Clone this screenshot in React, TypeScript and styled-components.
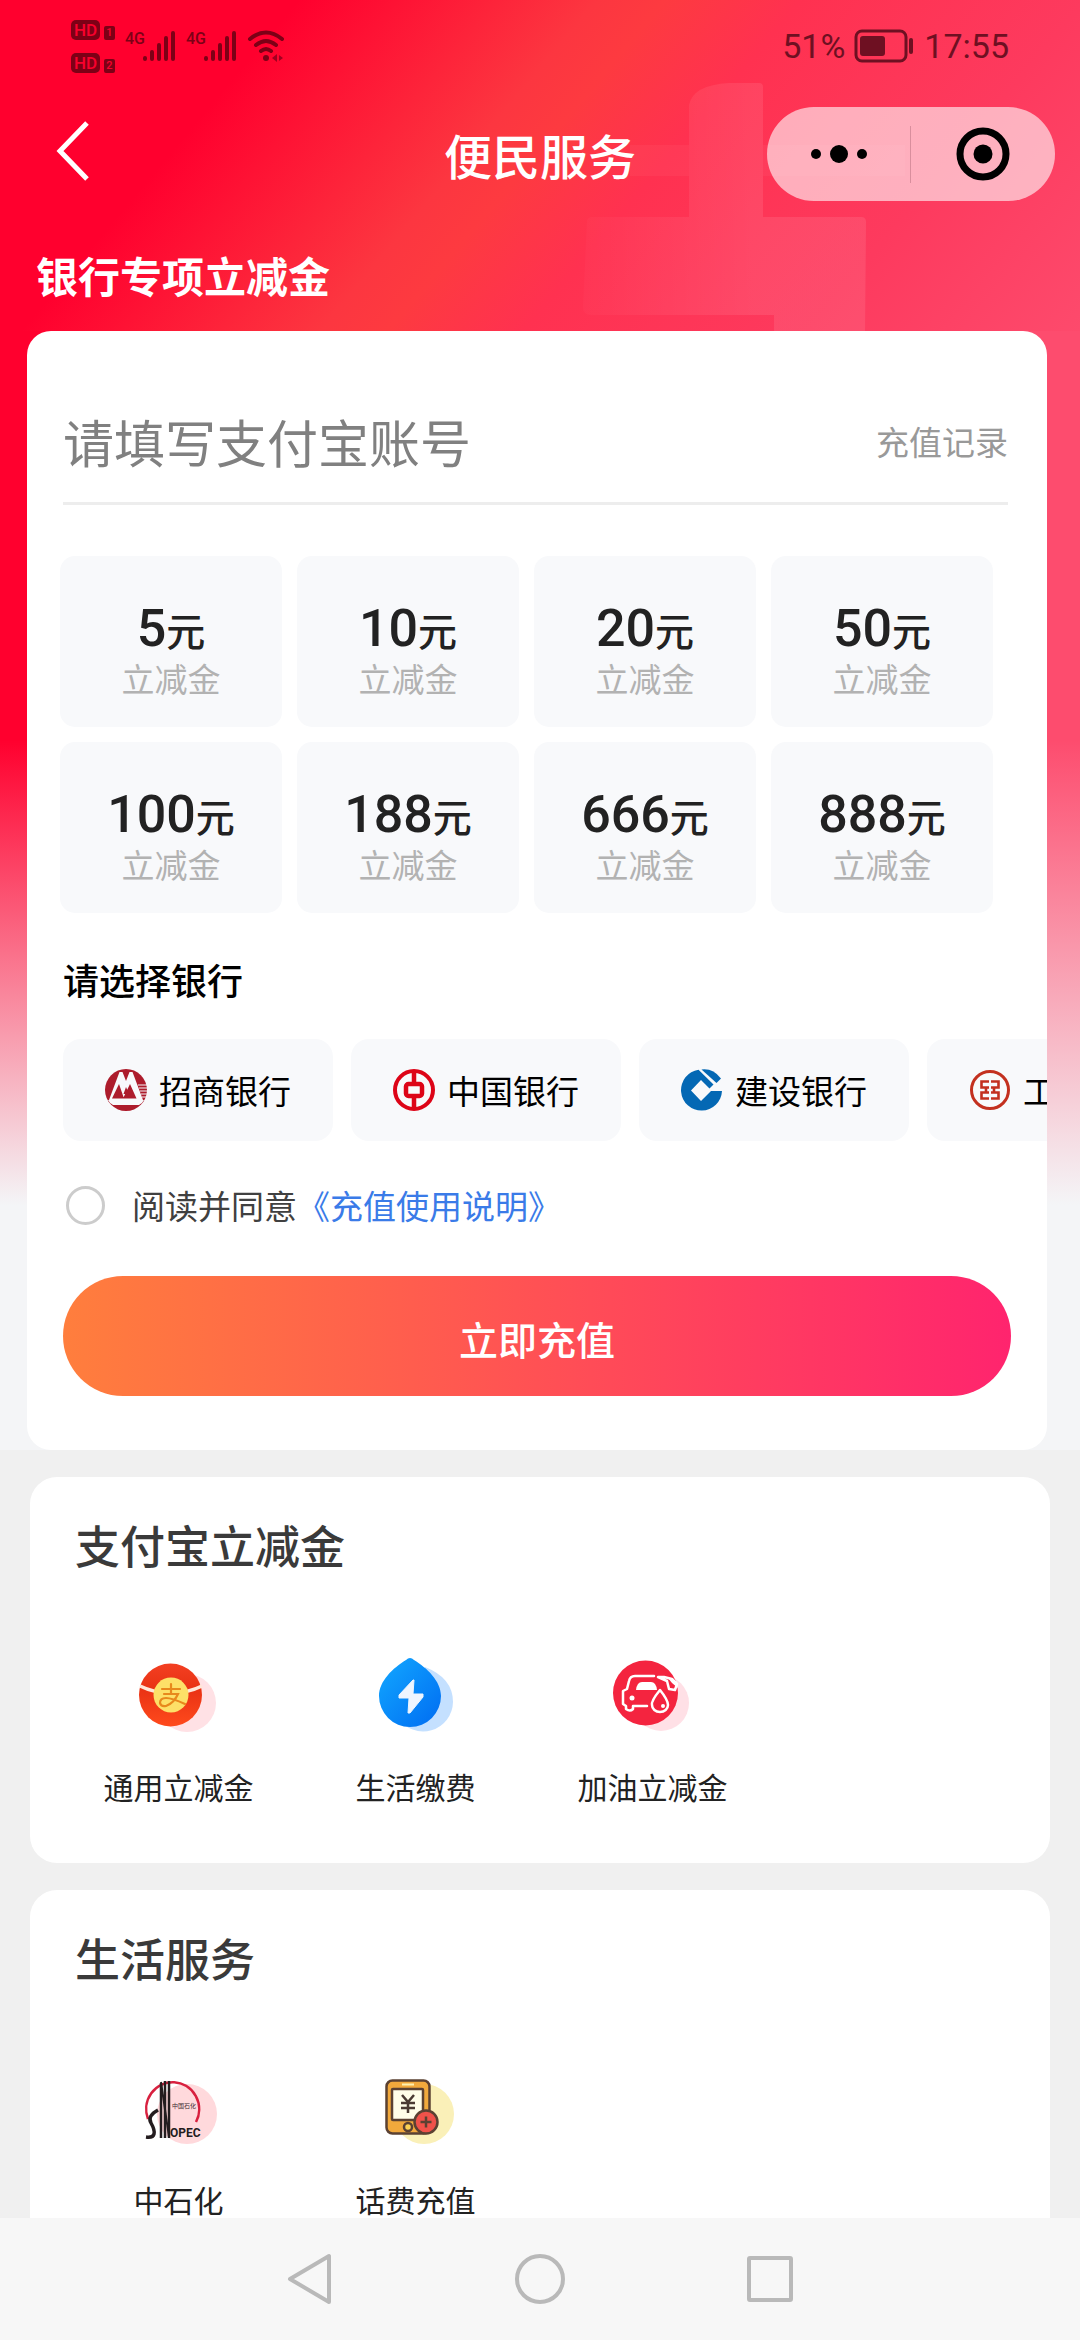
import React from "react";
import styled, { createGlobalStyle } from "styled-components";

const GlobalStyle = createGlobalStyle`
  * { box-sizing: border-box; }
  body {
    margin: 0;
    background: #f0f0f0;
    font-family: "Noto Sans CJK SC", "Noto Sans", sans-serif;
  }
  button, input { font-family: inherit; }
  button { border: 0; padding: 0; background: none; cursor: pointer; }
  h1, h2, p { margin: 0; }
`;

const Screen = styled.div`
  display: flex;
  flex-direction: column;
  height: 100vh;
  overflow: hidden;
`;

const Scroller = styled.main`
  flex: 1;
  min-height: 0;
  overflow-y: auto;
  scrollbar-width: none;
  &::-webkit-scrollbar { display: none; }
`;

const Hero = styled.div`
  position: relative;
  background:
    linear-gradient(180deg, rgba(244, 245, 247, 0) 740px, #f4f5f7 1205px),
    linear-gradient(130deg, #ff002e 22%, #fc3640 44%, #fd3a40 49%, #ff3150 59%, #fd3a5e 80%, #fd4a6c 100%) 0 0 / 100% 331px no-repeat,
    linear-gradient(90deg, #ff002e 10%, #fd4c6e 90%);
`;

const Pattern = styled.svg`
  position: absolute;
  top: 0;
  right: 0;
  width: 540px;
  height: 331px;
`;

const StatusBar = styled.header`
  position: relative;
  display: flex;
  justify-content: space-between;
  align-items: center;
  height: 92px;
  padding: 0 71px;
`;

const StatusGroup = styled.div<{ $gap: number }>`
  display: flex;
  align-items: center;
  gap: ${(p) => p.$gap}px;
  color: #6e1022;
  font: 400 34px/40px Roboto, sans-serif;
`;

const HdStack = styled.div`
  display: grid;
  gap: 13px;
`;

const HdRow = styled.div`
  display: flex;
  align-items: flex-end;
  gap: 4px;
`;

const HdBadge = styled.span<{ $small?: boolean }>`
  display: block;
  width: ${(p) => (p.$small ? 11 : 29)}px;
  height: ${(p) => (p.$small ? 14 : 20)}px;
  border-radius: ${(p) => (p.$small ? 2 : 5)}px;
  background: #7d0016;
  color: #f9002d;
  font: 500 ${(p) => (p.$small ? 11 : 17)}px/${(p) => (p.$small ? 14 : 20)}px Roboto, sans-serif;
  text-align: center;
`;

const TitleBar = styled.div`
  position: relative;
  display: grid;
  grid-template-columns: 1fr auto 1fr;
  align-items: center;
  height: 124px;
  padding: 0 25px;
`;

const BackButton = styled.button`
  justify-self: start;
  display: flex;
  padding: 0 31px 6px;
`;

const PageTitle = styled.h1`
  color: #fff;
  font-size: 48px;
  line-height: 60px;
  font-weight: 500;
`;

const Capsule = styled.div`
  justify-self: end;
  display: grid;
  grid-template-columns: 1fr 1fr;
  align-items: center;
  width: 288px;
  height: 94px;
  border-radius: 47px;
  background: rgba(255, 255, 255, 0.6);
`;

const CapsuleButton = styled.button<{ $divided?: boolean }>`
  display: flex;
  justify-content: center;
  align-items: center;
  height: 57px;
  border-right: ${(p) => (p.$divided ? "1px solid #d98e9d" : "0")};
`;

const HeroTitle = styled.h2`
  position: relative;
  padding: 29px 36px 26px;
  color: #fff;
  font-size: 42px;
  line-height: 60px;
  font-weight: 700;
`;

const RechargeCard = styled.form`
  position: relative;
  margin: 0 33px 0 27px;
  padding: 49px 36px 54px;
  border-radius: 24px;
  background: #fff;
`;

const AccountRow = styled.div`
  display: flex;
  align-items: center;
  height: 125px;
  margin-right: 3px;
  border-bottom: 3px solid #ededed;
`;

const AccountInput = styled.input`
  flex: 1;
  min-width: 0;
  height: 76px;
  padding: 0;
  border: 0;
  outline: 0;
  background: none;
  color: #222;
  font-size: 51px;
  &::placeholder { color: #808080; opacity: 1; }
`;

const RecordLink = styled.a`
  color: #999;
  font-size: 33px;
  line-height: 42px;
  text-decoration: none;
`;

const AmountGrid = styled.div`
  display: grid;
  grid-template-columns: repeat(4, 1fr);
  gap: 15px;
  margin: 51px 18px 0 -3px;
`;

const AmountButton = styled.button`
  display: flex;
  flex-direction: column;
  align-items: center;
  height: 171px;
  padding-top: 45px;
  border-radius: 15px;
  background: #f8f9fb;
`;

const Price = styled.span`
  color: #222;
  font: 500 52px/56px Roboto, sans-serif;
`;

const Yuan = styled.span`
  font: 500 39px/56px "Noto Sans CJK SC", sans-serif;
`;

const AmountNote = styled.span`
  color: #b2b2b2;
  font-size: 33px;
  line-height: 42px;
`;

const BankHeading = styled.p`
  margin: 42px 0 36px;
  color: #000;
  font-size: 36px;
  line-height: 48px;
  font-weight: 500;
`;

const BankList = styled.div`
  display: flex;
  gap: 18px;
  margin-right: -36px;
  overflow-x: auto;
  scrollbar-width: none;
  &::-webkit-scrollbar { display: none; }
`;

const BankButton = styled.button`
  flex: 0 0 270px;
  display: flex;
  align-items: center;
  gap: 12px;
  height: 102px;
  padding: 0 42px;
  border-radius: 18px;
  background: #f8f9fb;
  color: #000;
  font-size: 33px;
  line-height: 42px;
  white-space: nowrap;
  & > svg { flex: none; }
`;

const Agreement = styled.div`
  display: flex;
  align-items: center;
  height: 44px;
  margin: 42px 0 49px;
  padding-left: 3px;
  color: #404040;
  font-size: 33px;
  line-height: 44px;
`;

const AgreeBox = styled.input`
  appearance: none;
  width: 39px;
  height: 39px;
  margin: 0 27px 0 0;
  border: 3px solid #ccc;
  border-radius: 50%;
  background: #fff;
  &:checked { border: 11px solid #ff3a5e; }
`;

const TermsLink = styled.a`
  color: #3a7be8;
  text-decoration: none;
`;

const SubmitButton = styled.button`
  display: block;
  width: 100%;
  height: 120px;
  padding-top: 4px;
  border-radius: 60px;
  background: linear-gradient(90deg, #ff7e3d, #ff5154 50%, #ff246e);
  color: #fff;
  font-size: 39px;
  font-weight: 500;
`;

const ServiceCard = styled.section`
  margin: 27px 30px;
  padding: 38px 0 56px;
  border-radius: 27px;
  background: #fff;
`;

const ServiceTitle = styled.h2`
  padding-left: 45px;
  color: #3a3a3a;
  font-size: 45px;
  line-height: 60px;
  font-weight: 500;
`;

const ServiceGrid = styled.div`
  display: grid;
  grid-template-columns: repeat(4, 1fr);
  margin-top: 77px;
  padding: 0 42px 0 30px;
`;

const ServiceButton = styled.button`
  display: flex;
  flex-direction: column;
  align-items: center;
  gap: 23px;
  color: #222;
  font-size: 30px;
  line-height: 42px;
`;

const SystemNav = styled.nav`
  flex: none;
  display: flex;
  justify-content: center;
  align-items: center;
  gap: 178px;
  height: 122px;
  background: #f7f7f7;
`;

const NavButton = styled.button`
  display: flex;
`;

const Signal = () => (
  <svg width="51" height="32" viewBox="0 0 51 32" aria-hidden="true">
    <text x="0" y="14" fontFamily="Roboto, sans-serif" fontSize="16" fontWeight="500" fill="#7d0016">4G</text>
    <g stroke="#7d0016" strokeWidth="4" strokeLinecap="round">
      <path d="M20 28v1M27 22v7M34 15v14M41 8v21M48 3v26" />
    </g>
  </svg>
);

const Wifi = () => (
  <svg width="38" height="32" viewBox="0 0 38 32" fill="none" aria-hidden="true">
    <g stroke="#7d0016" strokeWidth="4" strokeLinecap="round">
      <path d="M3 9Q19 -4 35 9M9 15Q19 7 29 15M14 21Q19 17 24 21" />
    </g>
    <circle cx="19" cy="28" r="3" fill="#7d0016" />
    <path d="M30 24v8l-5-4zM32 25l4 3-4 3z" fill="#a00020" />
  </svg>
);

const Battery = () => (
  <svg width="61" height="34" viewBox="0 0 61 34" fill="none" aria-hidden="true">
    <rect x="2" y="2" width="50" height="30" rx="6" stroke="#6e1022" strokeWidth="3" />
    <rect x="6" y="7" width="25" height="20" rx="3" fill="#6e1022" />
    <rect x="55" y="9" width="4" height="16" rx="2" fill="#6e1022" />
  </svg>
);

const CmbLogo = () => (
  <svg width="42" height="42" viewBox="0 0 42 42" aria-hidden="true">
    <circle cx="21" cy="21" r="21" fill="#ad1c2c" />
    <path d="M4 31 14.500 3h3L21 12l3.500-9h3L38 31z" fill="#f8f9fb" />
    <path d="M7 29.500 14 15l5 14.500zM18.500 25 21 18l3 7z M18 29.500 25 15l6.500 14.500z" fill="#ad1c2c" />
    <path d="M3 31h36q-2 4-5 5H8q-3-1-5-5z" fill="#f8f9fb" />
    <path d="M33 16h9M34 19h8M35 22h7M36 25h6M37 28h4" stroke="#f8f9fb" strokeWidth="1.200" />
  </svg>
);

const BocLogo = () => (
  <svg width="42" height="42" viewBox="0 0 42 42" fill="none" stroke="#dd0417" aria-hidden="true">
    <circle cx="21" cy="21" r="19" strokeWidth="4" />
    <rect x="13" y="15" width="16" height="12" rx="2.500" strokeWidth="4.500" />
    <path d="M21 3v12M21 27v12" strokeWidth="4.500" />
  </svg>
);

const CcbLogo = () => (
  <svg width="42" height="42" viewBox="0 0 42 42" aria-hidden="true">
    <path d="M17.500 0.800A20.500 20.500 0 1 0 41 22H30L20 32 10 21.500 20 11l8.500 8.500 4-4z" fill="#0468b4" />
    <path d="M20.500 0.500Q32-1 40 9.500L35.500 14z" fill="#0468b4" />
  </svg>
);

const IcbcLogo = () => (
  <svg width="42" height="42" viewBox="0 0 42 42" fill="none" stroke="#c3301f" aria-hidden="true">
    <circle cx="21" cy="21" r="18.500" strokeWidth="3" />
    <path d="M20 12.500H12.500v6H17v5h-4.500v6H20M22 12.500h7.500v6H25v5h4.500v6H22M17 18.500h3M25 18.500h-3M17 23.500h3M25 23.500h-3" strokeWidth="2.600" />
  </svg>
);

const CouponIcon = () => (
  <svg width="90" height="90" viewBox="0 0 90 90" aria-hidden="true">
    <defs>
      <linearGradient id="coupon" x1="0" y1="0" x2="0" y2="1">
        <stop offset="0" stopColor="#f33f22" />
        <stop offset="0.400" stopColor="#e93214" />
        <stop offset="1" stopColor="#ff4a1c" />
      </linearGradient>
    </defs>
    <circle cx="53" cy="51" r="29" fill="#ffe1e5" />
    <circle cx="36.500" cy="43" r="31.500" fill="url(#coupon)" />
    <path d="M6 34q14 7 31 7t31-7" fill="none" stroke="#ffe6d8" strokeWidth="3.500" />
    <circle cx="37" cy="43" r="17.500" fill="#fde068" />
    <g fill="none" stroke="#e8891c" strokeWidth="2.200" strokeLinecap="round">
      <path d="M28 37h18M37 32v9M30 42h14q-4 9-12 12-5 1-6-3 0-5 6-5 6 0 19 6" />
    </g>
  </svg>
);

const UtilityIcon = () => (
  <svg width="90" height="90" viewBox="0 0 90 90" aria-hidden="true">
    <defs>
      <linearGradient id="drop" x1="0" y1="0" x2="1" y2="1">
        <stop offset="0" stopColor="#12a8ff" />
        <stop offset="1" stopColor="#006cf2" />
      </linearGradient>
    </defs>
    <path d="M54 15Q82 26 82 50A30 30 0 0 1 27 66z" fill="#c4e0ff" />
    <path d="M35 8Q39 4 43 8C56 16 70 29 70 44A31 31 0 0 1 8 44C8 29 22 16 35 8z" fill="url(#drop)" />
    <path d="M42 28 28 43v3h10l-1 15h2l13-16v-3H42l1-14z" fill="#eef5ff" stroke="#eef5ff" strokeWidth="1" strokeLinejoin="round" />
  </svg>
);

const FuelIcon = () => (
  <svg width="90" height="90" viewBox="0 0 90 90" fill="none" aria-hidden="true">
    <circle cx="53" cy="51" r="28" fill="#ffe0e6" />
    <circle cx="37.500" cy="41" r="32.500" fill="#f4243f" />
    <g stroke="#fff" strokeWidth="2.500" strokeLinecap="round" strokeLinejoin="round">
      <path d="M46 24H27q-5 0-6 5l-2 8-4 2v13l3 2v3q4 3 7 0v-3h14" />
      <path d="M52 38Q43 49 44 53a8 7 0 0 0 16 0q0-5-8-15z" fill="#f4243f" />
      <path d="M50 25h6l8 2 5 5-2 6-6-1-2-8z" />
    </g>
    <path d="M28 38q1-8 6-8h9q5 0 6 8z" fill="#fff" />
    <circle cx="24" cy="46" r="2.500" fill="#fff" />
    <path d="M60 26l9 4 1 6-6-5z" fill="#fff" />
    <circle cx="55" cy="54" r="2" fill="#fff" />
  </svg>
);

const SinopecIcon = () => (
  <svg width="90" height="90" viewBox="0 0 90 90" fill="none" aria-hidden="true">
    <circle cx="53" cy="49" r="30" fill="#ffd9dc" />
    <path d="M14 54A26.500 27 0 1 1 62 57" stroke="#d8203f" strokeWidth="2.500" />
    <path d="M27 18v55M31 16v57M35 16v57" stroke="#241d1f" strokeWidth="2.500" />
    <path d="M27 17 35 72" stroke="#241d1f" strokeWidth="2" />
    <path d="M24 45q-11 6-7 13t3 11-8 3" stroke="#241d1f" strokeWidth="3.500" />
    <text x="36" y="72" fontFamily="Roboto, sans-serif" fontSize="12" fontWeight="700" fill="#241d1f">OPEC</text>
    <text x="38" y="43" fontFamily="Noto Sans CJK SC, sans-serif" fontSize="6" fill="#3a2a2e">中国石化</text>
  </svg>
);

const PhoneIcon = () => (
  <svg width="90" height="90" viewBox="0 0 90 90" fill="none" aria-hidden="true">
    <circle cx="53" cy="49" r="30" fill="#faf0b8" />
    <g stroke="#5b4132" strokeWidth="2.500">
      <rect x="15.500" y="15.500" width="43" height="53" rx="6" fill="#f2a93c" />
      <rect x="21" y="24" width="31" height="31" rx="1" fill="#fffde8" />
      <circle cx="37" cy="62" r="4" fill="#fbd154" />
      <circle cx="55" cy="57" r="11.500" fill="#f0524a" />
      <path d="M55 51.500v11M49.500 57h11" />
    </g>
    <path d="M31 19.500h12" stroke="#fff0b0" strokeWidth="2" />
    <path d="M31 30l6 7 6-7M37 37v11M30 38h14M30 43h14" stroke="#4a3a32" strokeWidth="2.500" />
  </svg>
);

const amounts = [5, 10, 20, 50, 100, 188, 666, 888];

const banks = [
  { name: "招商银行", Logo: CmbLogo },
  { name: "中国银行", Logo: BocLogo },
  { name: "建设银行", Logo: CcbLogo },
  { name: "工商银行", Logo: IcbcLogo },
];

const services = [
  {
    title: "支付宝立减金",
    items: [
      { name: "通用立减金", Icon: CouponIcon },
      { name: "生活缴费", Icon: UtilityIcon },
      { name: "加油立减金", Icon: FuelIcon },
    ],
  },
  {
    title: "生活服务",
    items: [
      { name: "中石化", Icon: SinopecIcon },
      { name: "话费充值", Icon: PhoneIcon },
    ],
  },
];

export default function App() {
  return (
    <Screen>
      <GlobalStyle />
      <Scroller>
        <Hero>
          <Pattern viewBox="0 0 540 331" fill="#fff" aria-hidden="true">
            <defs>
              <linearGradient id="mark" x1="0" x2="1">
                <stop offset="0" stopColor="#fff" stopOpacity="0.020" />
                <stop offset="0.600" stopColor="#fff" stopOpacity="0.090" />
              </linearGradient>
            </defs>
            <path d="M149 217V105q4-20 40-22h30q4 0 4 4v130h98q5 0 5 5l-1 109h-91v-16H51q-8 0-8-8l4-86q0-4 6-4z" fill="url(#mark)" />
            <path d="M90 145h59v31H90zM223 145h142v31H223z" fillOpacity="0.040" />
          </Pattern>
          <StatusBar>
            <StatusGroup $gap={10}>
              <HdStack>
                <HdRow><HdBadge>HD</HdBadge><HdBadge $small>1</HdBadge></HdRow>
                <HdRow><HdBadge>HD</HdBadge><HdBadge $small>2</HdBadge></HdRow>
              </HdStack>
              <Signal />
              <Signal />
              <Wifi />
            </StatusGroup>
            <StatusGroup $gap={9}>
              <span>51%</span>
              <Battery />
              <span>17:55</span>
            </StatusGroup>
          </StatusBar>
          <TitleBar>
            <BackButton aria-label="返回">
              <svg width="34" height="62" viewBox="0 0 34 62" fill="none">
                <path d="M31 3 4 31l27 28" stroke="#fff" strokeWidth="5" />
              </svg>
            </BackButton>
            <PageTitle>便民服务</PageTitle>
            <Capsule>
              <CapsuleButton $divided aria-label="更多">
                <svg width="58" height="20" viewBox="0 0 58 20">
                  <circle cx="6" cy="10" r="5" />
                  <circle cx="29" cy="10" r="9" />
                  <circle cx="52" cy="10" r="5" />
                </svg>
              </CapsuleButton>
              <CapsuleButton aria-label="关闭">
                <svg width="54" height="54" viewBox="0 0 54 54">
                  <circle cx="27" cy="27" r="23" fill="none" stroke="#000" strokeWidth="7" />
                  <circle cx="27" cy="27" r="9.500" />
                </svg>
              </CapsuleButton>
            </Capsule>
          </TitleBar>
          <HeroTitle>银行专项立减金</HeroTitle>
          <RechargeCard onSubmit={(e) => e.preventDefault()}>
            <AccountRow>
              <AccountInput aria-label="支付宝账号" placeholder="请填写支付宝账号" />
              <RecordLink href="#records">充值记录</RecordLink>
            </AccountRow>
            <AmountGrid>
              {amounts.map((value) => (
                <AmountButton type="button" key={value}>
                  <Price>{value}<Yuan>元</Yuan></Price>
                  <AmountNote>立减金</AmountNote>
                </AmountButton>
              ))}
            </AmountGrid>
            <BankHeading>请选择银行</BankHeading>
            <BankList>
              {banks.map(({ name, Logo }) => (
                <BankButton type="button" key={name}>
                  <Logo />
                  {name}
                </BankButton>
              ))}
            </BankList>
            <Agreement>
              <AgreeBox type="checkbox" id="agree" />
              <label htmlFor="agree">阅读并同意</label>
              <TermsLink href="#terms">《充值使用说明》</TermsLink>
            </Agreement>
            <SubmitButton type="submit">立即充值</SubmitButton>
          </RechargeCard>
        </Hero>
        {services.map((group) => (
          <ServiceCard key={group.title}>
            <ServiceTitle>{group.title}</ServiceTitle>
            <ServiceGrid>
              {group.items.map(({ name, Icon }) => (
                <ServiceButton key={name}>
                  <Icon />
                  {name}
                </ServiceButton>
              ))}
            </ServiceGrid>
          </ServiceCard>
        ))}
      </Scroller>
      <SystemNav>
        <NavButton aria-label="后退">
          <svg width="52" height="52" viewBox="0 0 52 52" fill="none" stroke="#b9b9b9" strokeWidth="4" strokeLinejoin="round">
            <path d="M45 3v46L6 26z" />
          </svg>
        </NavButton>
        <NavButton aria-label="主页">
          <svg width="52" height="52" viewBox="0 0 52 52" fill="none" stroke="#b9b9b9" strokeWidth="4">
            <circle cx="26" cy="26" r="23" />
          </svg>
        </NavButton>
        <NavButton aria-label="最近任务">
          <svg width="52" height="52" viewBox="0 0 52 52" fill="none" stroke="#b9b9b9" strokeWidth="4" strokeLinejoin="round">
            <rect x="5" y="5" width="42" height="42" rx="1" />
          </svg>
        </NavButton>
      </SystemNav>
    </Screen>
  );
}
